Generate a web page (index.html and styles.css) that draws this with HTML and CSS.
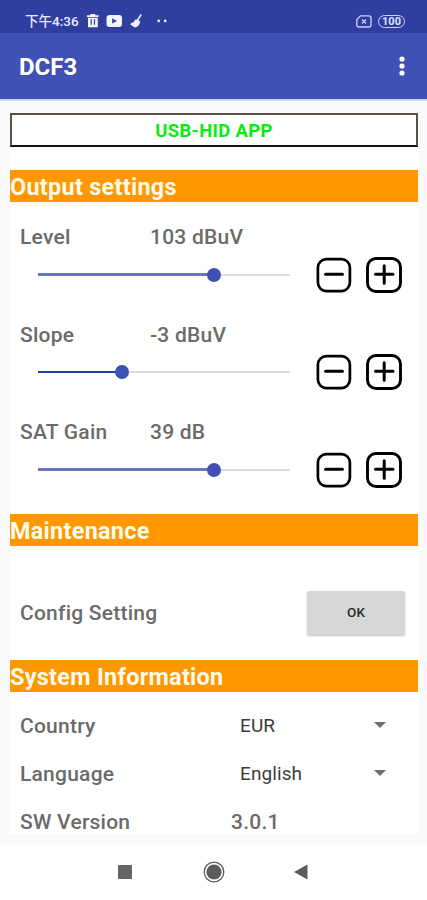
FILE: index.html
```html
<!DOCTYPE html>
<html lang="en">
<head>
<meta charset="utf-8">
<title>DCF3</title>
<link rel="stylesheet" href="styles.css">
</head>
<body>
<svg class="defs" width="0" height="0">
  <symbol id="minus" viewBox="0 0 36 36"><rect x="1.9" y="2.1" width="32" height="32" rx="8.5" fill="none" stroke="#000" stroke-width="2.7"/><path d="M9.6 17.3h16.8" stroke="#000" stroke-width="3" stroke-linecap="round"/></symbol>
  <symbol id="plus" viewBox="0 0 36 36"><rect x="1.5" y="1.5" width="33" height="33" rx="8.5" fill="none" stroke="#000" stroke-width="2.9"/><path d="M9.5 17.3h17.5M18.2 8.7v17.6" stroke="#000" stroke-width="3" stroke-linecap="round"/></symbol>
</svg>
<header>
  <div class="status">
    <span class="time">下午4:36</span>
    <svg class="notif" width="82" height="16" viewBox="0 0 82 16" fill="#f1f3ff">
      <path d="M0 2.2h3.3V1h5v1.2h3.3v1.7H0zM1 4.8h9.8v9.4H1z"/>
      <path d="M4.2 6.3v5.5M7.5 6.3v5.5" stroke="#303f9f" stroke-width="1.2"/>
      <rect x="19.5" y="1.9" width="15.5" height="12" rx="3"/>
      <path d="M25.2 5.3l4.8 2.6-4.8 2.7z" fill="#303f9f"/>
      <path d="M53.6 1l1.2 1-3.3 5 1.5 1.6c0 3.2-2.3 5.6-5 5.8l-4.6-2.6.6-1.8 2.4-.6 1.7-2.6 1.9-.3z"/>
      <circle cx="71.7" cy="7.9" r="1.3"/><circle cx="78.2" cy="7.9" r="1.3"/>
    </svg>
    <span class="grow"></span>
    <svg width="16" height="13" viewBox="0 0 16 13" fill="none" stroke="#cbd2f6" stroke-width="1.3"><path d="M4.5.8h8.3q2.2 0 2.2 2.2v6.8q0 2.2-2.2 2.2H3Q.8 12 .8 9.8V4.5z"/><path d="M6 4.5l4 4M10 4.5l-4 4"/></svg>
    <span class="battery">100</span>
  </div>
  <div class="bar">
    <h1>DCF3</h1>
    <svg width="6" height="20" viewBox="0 0 6 20" fill="#fff"><circle cx="3" cy="3" r="2.6"/><circle cx="3" cy="10" r="2.6"/><circle cx="3" cy="17" r="2.6"/></svg>
  </div>
</header>
<main>
  <div class="device">USB-HID APP</div>
  <h2>Output settings</h2>
  <section class="levels">
    <div class="level">
      <div class="caption"><span>Level</span><span>103 dBuV</span></div>
      <div class="control"><div class="slider"><i class="fill" style="width:70%"></i><i class="knob"></i><i class="rest"></i></div><svg width="36" height="36"><use href="#minus"/></svg><svg width="36" height="36"><use href="#plus"/></svg></div>
    </div>
    <div class="level">
      <div class="caption"><span>Slope</span><span>-3 dBuV</span></div>
      <div class="control"><div class="slider dark"><i class="fill" style="width:33.2%"></i><i class="knob"></i><i class="rest"></i></div><svg width="36" height="36"><use href="#minus"/></svg><svg width="36" height="36"><use href="#plus"/></svg></div>
    </div>
    <div class="level">
      <div class="caption"><span>SAT Gain</span><span>39 dB</span></div>
      <div class="control"><div class="slider"><i class="fill" style="width:70%"></i><i class="knob"></i><i class="rest"></i></div><svg width="36" height="36"><use href="#minus"/></svg><svg width="36" height="36"><use href="#plus"/></svg></div>
    </div>
  </section>
  <h2>Maintenance</h2>
  <section class="config"><span>Config Setting</span><button>OK</button></section>
  <h2>System Information</h2>
  <section class="info">
    <div class="row"><span>Country</span><span class="choice">EUR</span><svg width="12" height="6" viewBox="0 0 12 6"><path d="M0 0h12L6 6z" fill="#6c6c6c"/></svg></div>
    <div class="row"><span>Language</span><span class="choice">English</span><svg width="12" height="6" viewBox="0 0 12 6"><path d="M0 0h12L6 6z" fill="#6c6c6c"/></svg></div>
    <div class="row"><span>SW Version</span><span class="version">3.0.1</span></div>
  </section>
</main>
<nav>
  <svg width="14" height="14"><rect width="14" height="14" rx=".6" fill="#646464"/></svg>
  <svg width="22" height="22" viewBox="0 0 22 22"><circle cx="11" cy="11" r="9.8" fill="none" stroke="#5c5c5c" stroke-width="1.3"/><circle cx="11" cy="11" r="7.6" fill="#5c5c5c"/></svg>
  <svg width="14" height="16" viewBox="0 0 14 16"><path d="M0 8L13.5.5v15z" fill="#5c5c5c"/></svg>
</nav>
</body>
</html>
```
FILE: styles.css
```css
* { box-sizing: border-box; }
body {
  margin: 0;
  height: 900px;
  overflow: hidden;
  display: flex;
  flex-direction: column;
  background: #fafafa;
  font-family: Roboto, "Noto Sans CJK TC", sans-serif;
}
.defs { display: none; }
h1, h2 { margin: 0; }
header { flex: none; color: #fff; border-bottom: 2px solid #ccd6ee; }
.status {
  height: 33px;
  padding: 9px 22px 0 25px;
  display: flex;
  align-items: center;
  background: #303f9f;
}
.time { width: 62px; font-size: 13.5px; line-height: 20px; font-weight: 500; color: #e8ebff; white-space: nowrap; }
.grow { flex: 1; }
.battery {
  width: 27px;
  height: 13px;
  margin-left: 6px;
  border: 1.3px solid #cbd2f6;
  border-radius: 7px;
  font-size: 11px;
  line-height: 11px;
  font-weight: 700;
  text-align: center;
  color: #dfe4ff;
}
.bar {
  height: 66px;
  padding: 0 22px 0 19px;
  display: flex;
  align-items: center;
  justify-content: space-between;
  background: #3f51b5;
}
h1 { font-size: 24px; font-weight: 700; line-height: 28px; padding-top: 2px; }
main {
  flex: none;
  height: 721px;
  margin: 12px 8px 0 10px;
  padding-right: 1px;
  background: #fff;
}
.device {
  height: 34px;
  border: 2px solid #595143;
  border-bottom-color: #111;
  font-size: 18.5px;
  line-height: 32px;
  font-weight: 700;
  letter-spacing: .3px;
  text-align: center;
  color: #08ec10;
}
h2 {
  height: 32px;
  font-size: 23.4px;
  line-height: 35px;
  font-weight: 700;
  letter-spacing: .3px;
  color: #fffbea;
  background: #ff9800;
  white-space: nowrap;
}
.device + h2 { margin-top: 23px; }
.levels { height: 312px; padding: 22px 16px 0 10px; }
.level { height: 97.6px; }
.caption {
  display: grid;
  grid-template-columns: 130px 1fr;
  height: 26px;
}
.caption, .config, .row {
  font-size: 21px;
  line-height: 26px;
  font-weight: 500;
  letter-spacing: .23px;
  color: #6b6b6b;
}
.control { display: flex; align-items: center; height: 49px; gap: 14px; }
.slider { width: 252px; margin: 0 12px 0 18px; display: flex; align-items: center; }
.fill { height: 3px; margin-right: -7px; background: #6777b4; }
.knob { width: 14px; height: 14px; border-radius: 50%; background: #3f51b5; flex: none; z-index: 1; }
.rest { height: 2px; flex: 1; background: #dcdcdc; }
.dark .fill { height: 2px; background: #21409f; }
.config {
  height: 114px;
  padding: 20px 13px 0 10px;
  display: flex;
  align-items: center;
  justify-content: space-between;
}
button {
  width: 98px;
  height: 44px;
  border: 0;
  border-radius: 2px;
  background: #d6d8d7;
  box-shadow: 0 1px 2px #0004;
  font: 500 13.5px Roboto, sans-serif;
  padding: 0 6px 2px;
  color: #2a2a2a;
}
.info { padding: 10px 32px 0 10px; }
.row { height: 48px; display: grid; grid-template-columns: 220px 1fr 12px; align-items: center; }
.choice { font-size: 19px; font-weight: 400; letter-spacing: 0.1px; color: #3c3c3c; margin-top: -1px; }
.row svg { margin-top: -2px; }
.version { margin-left: -9px; }
nav { height: 56px; margin-top: auto; display: flex; align-items: center; padding: 0 0 0 118px; background: #fff; }
nav svg:nth-child(2) { margin: 0 69px 0 71px; }
```
